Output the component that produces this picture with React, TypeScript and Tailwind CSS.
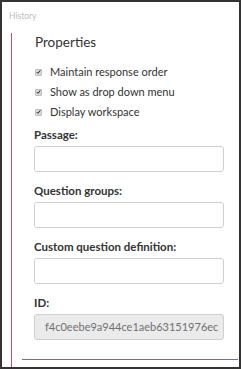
import React from 'react'

const font = { fontFamily: 'Lato, "Open Sans", sans-serif' }

function Check({ label }: { label: string }) {
  return (
    <div className="flex items-center h-[20px]">
      <span className="w-[7px] h-[7px] bg-[#d9d9d9] border border-[#bdbdbd] rounded-[1px] flex items-center justify-center ml-[1px]">
        <svg viewBox="0 0 8 8" className="w-[6px] h-[6px]">
          <path d="M1.2 4.2 L3.2 6.2 L6.8 1.5" fill="none" stroke="#222" strokeWidth="1.6" />
        </svg>
      </span>
      <span className="ml-[8px] text-[11px] text-[#333]">{label}</span>
    </div>
  )
}

function Field({ label, value, readOnly }: { label: string; value?: string; readOnly?: boolean }) {
  return (
    <div className="mb-[12px] last:mb-0">
      <div className="h-[14px] leading-[14px] text-[11.5px] font-bold text-[#333]">{label}</div>
      <div
        className={`mt-[4px] h-[26px] w-[190px] border border-[#cfcfcf] rounded-[3px] overflow-hidden flex items-center pl-[10px] text-[11px] text-[#707070] whitespace-nowrap ${
          readOnly ? 'bg-[#ebebeb]' : 'bg-white'
        }`}
      >
        {value}
      </div>
    </div>
  )
}

export default function App() {
  return (
    <div style={font} className="w-[241px] h-[369px] border-2 border-[#333] bg-white flex flex-col overflow-hidden">
      {/* History tab label */}
      <div className="h-[31px] pl-[7px] pt-[9px] text-[8.5px] leading-[10px] text-[#bdbdbd]">History</div>

      {/* Properties panel */}
      <div className="flex-1 ml-[9px] border-l border-[#a64bc2] pl-[10px] pr-[1px]">
        <div className="border-b border-[#a64bc2] pl-[12px] pb-[19px]">
          <div className="h-[18px] leading-[18px] text-[13.5px] text-[#333] pl-[1px]">Properties</div>

          <div className="mt-[11px]">
            <Check label="Maintain response order" />
            <Check label="Show as drop down menu" />
            <Check label="Display workspace" />
          </div>

          <div className="mt-[6px]">
            <Field label="Passage:" />
            <Field label="Question groups:" />
            <Field label="Custom question definition:" />
            <Field label="ID:" value="f4c0eebe9a944ce1aeb63151976ec" readOnly />
          </div>
        </div>
      </div>
    </div>
  )
}
